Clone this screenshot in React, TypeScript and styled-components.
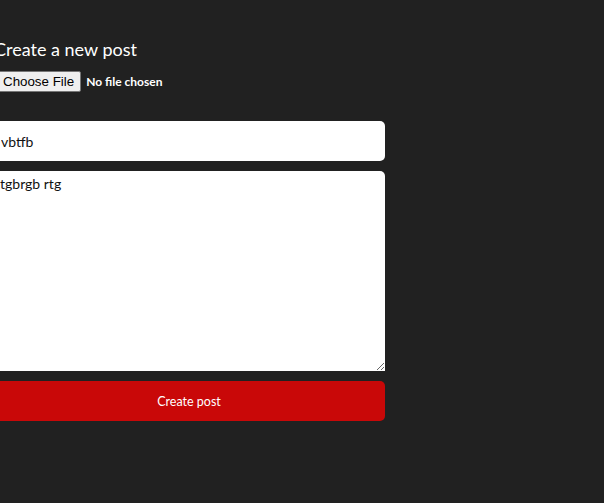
import React from "react";
import styled, { createGlobalStyle } from "styled-components";

const GlobalStyle = createGlobalStyle`
  html, body {
    margin: 0;
    padding: 0;
    background: #212121;
    height: 100%;
  }
  #root {
    min-height: 100%;
  }
`;

function App() {
  return (
    <>
      <GlobalStyle />
      <Page>
        <Form>
          <Title>Create a new post</Title>
          <FileInput type="file" />
          <Fields>
            <TextInput type="text" defaultValue="vbtfb" spellCheck={false} />
            <TextArea defaultValue="tgbrgb rtg" spellCheck={false} />
            <SubmitButton type="button">Create post</SubmitButton>
          </Fields>
        </Form>
      </Page>
    </>
  );
}

export default App;

const Page = styled.div`
  min-height: 503px;
  background: #212121;
  padding-top: 37px;
  box-sizing: border-box;
  font-family: Lato, "Open Sans", sans-serif;
`;

const Form = styled.div`
  width: 392px;
  margin-left: -7px;
  display: flex;
  flex-direction: column;
`;

const Title = styled.h2`
  margin: 0 0 10px 1px;
  font-size: 18px;
  font-weight: 400;
  color: #ffffff;
  line-height: 24px;
`;

const FileInput = styled.input`
  margin-left: 3px;
  font-family: Lato, "Open Sans", sans-serif;
  font-size: 12px;
  font-weight: 700;
  color: #ffffff;
  &::file-selector-button {
    font-family: "Liberation Sans", Arial, sans-serif;
    font-size: 13.33px;
    font-weight: 400;
    color: #000;
    background: #efefef;
    border: 1px solid #767676;
    border-radius: 2px;
    padding: 2px 6px;
    margin-right: 5px;
  }
`;

const Fields = styled.div`
  margin-top: 29px;
  display: flex;
  flex-direction: column;
  gap: 10px;
`;

const TextInput = styled.input`
  height: 40px;
  box-sizing: border-box;
  border: none;
  border-radius: 5px;
  padding: 0 8px;
  font-family: Lato, "Open Sans", sans-serif;
  font-size: 14px;
  color: #111;
  background: #fff;
  outline: none;
`;

const TextArea = styled.textarea`
  height: 200px;
  box-sizing: border-box;
  border: none;
  border-radius: 5px 5px 0 5px;
  padding: 4px 7px;
  font-family: Lato, "Open Sans", sans-serif;
  font-size: 14px;
  color: #111;
  background: #fff;
  outline: none;
  resize: vertical;
`;

const SubmitButton = styled.button`
  height: 40px;
  border: none;
  border-radius: 5px;
  background: #c90808;
  color: #ffffff;
  font-family: Lato, "Open Sans", sans-serif;
  font-size: 12.5px;
  cursor: pointer;
`;
